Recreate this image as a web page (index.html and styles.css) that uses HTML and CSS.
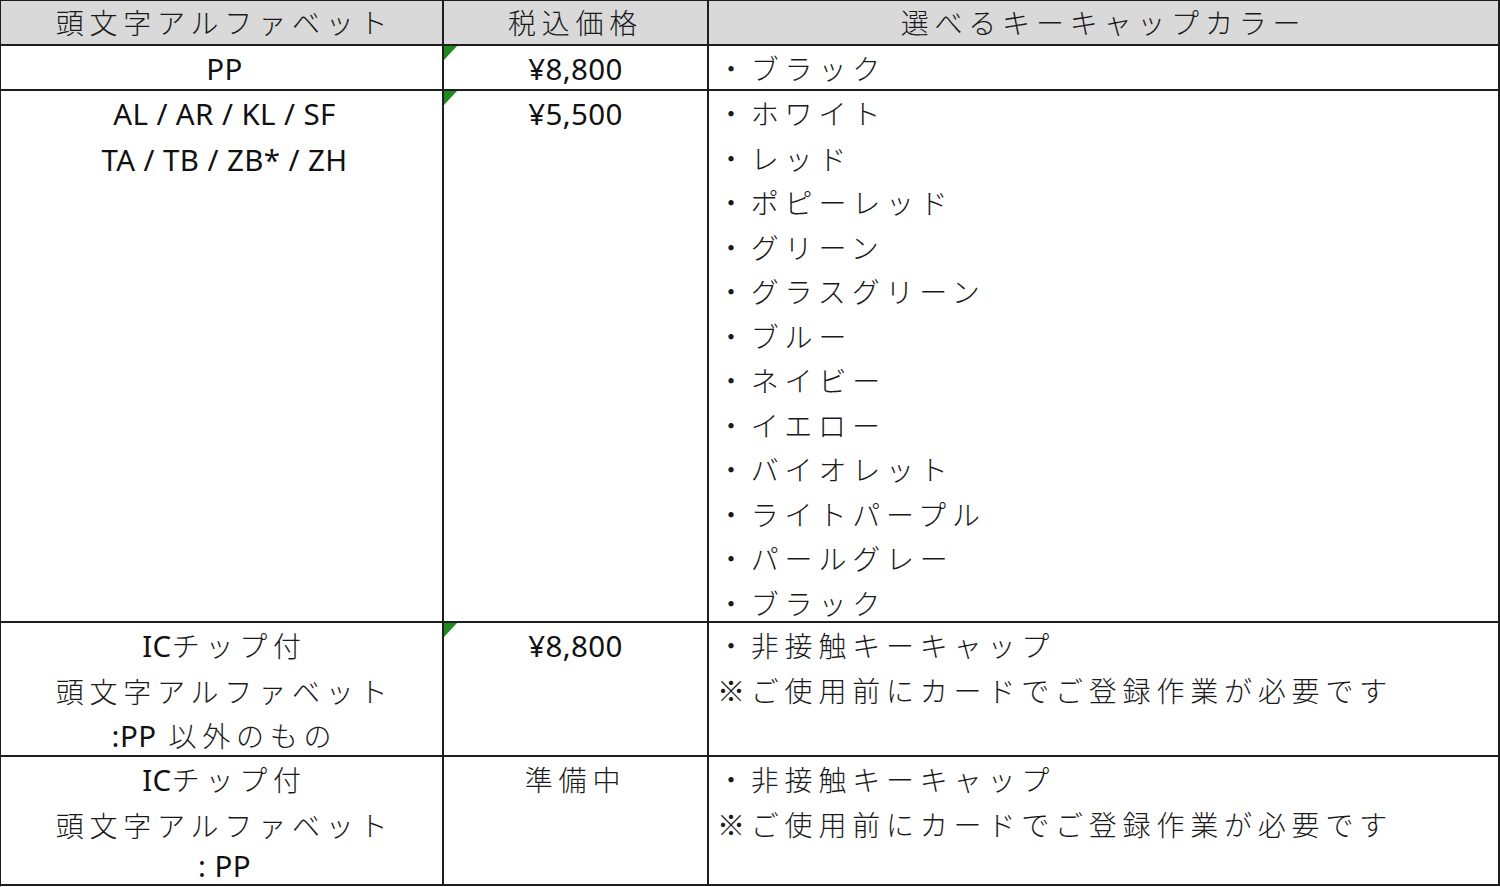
FILE: index.html
```html
<!DOCTYPE html>
<html lang="ja">
<head>
<meta charset="utf-8">
<title>キーキャップ価格表</title>
<link rel="stylesheet" href="styles.css">
</head>
<body>
<div class="sheet">
  <div class="cell head c1">頭文字アルファベット</div>
  <div class="cell head c2">税込価格</div>
  <div class="cell head c3">選べるキーキャップカラー</div>

  <div class="cell c1"><span class="lat">PP</span></div>
  <div class="cell c2 flag"><span class="lat">¥8,800</span></div>
  <div class="cell c3"><div>・ブラック</div></div>

  <div class="cell c1">
    <div><span class="lat">AL / AR / KL / SF</span></div>
    <div><span class="lat">TA / TB / ZB* / ZH</span></div>
  </div>
  <div class="cell c2 flag"><span class="lat">¥5,500</span></div>
  <div class="cell c3">
    <div>・ホワイト</div>
    <div>・レッド</div>
    <div>・ポピーレッド</div>
    <div>・グリーン</div>
    <div>・グラスグリーン</div>
    <div>・ブルー</div>
    <div>・ネイビー</div>
    <div>・イエロー</div>
    <div>・バイオレット</div>
    <div>・ライトパープル</div>
    <div>・パールグレー</div>
    <div>・ブラック</div>
  </div>

  <div class="cell c1">
    <div><span class="lat">IC</span>チップ付</div>
    <div>頭文字アルファベット</div>
    <div><span class="lat">:PP</span> 以外のもの</div>
  </div>
  <div class="cell c2 flag"><span class="lat">¥8,800</span></div>
  <div class="cell c3">
    <div>・非接触キーキャップ</div>
    <div class="note">※ご使用前にカードでご登録作業が必要です</div>
  </div>

  <div class="cell c1">
    <div><span class="lat">IC</span>チップ付</div>
    <div>頭文字アルファベット</div>
    <div class="lastline"><span class="lat">: PP</span></div>
  </div>
  <div class="cell c2">準備中</div>
  <div class="cell c3">
    <div>・非接触キーキャップ</div>
    <div class="note">※ご使用前にカードでご登録作業が必要です</div>
  </div>
</div>
</body>
</html>
```

FILE: styles.css
```css
html, body {
  margin: 0;
  padding: 0;
  background: #ffffff;
}

.sheet {
  width: 1500px;
  height: 887px;
  box-sizing: border-box;
  display: grid;
  grid-template-columns: 443px 265px 1fr;
  grid-template-rows: 45px 45px 532px 134px 1fr;
  border-top: 1px solid #1e1e1e;
  border-left: 1px solid #1e1e1e;
  border-bottom: 1px solid #ffffff;
  font-family: "Noto Sans CJK JP", "Noto Sans", sans-serif;
  font-weight: 300;
  font-size: 28px;
  line-height: 44.5px;
  color: #1a1a1a;
  letter-spacing: 5.8px;
  overflow: hidden;
}

.cell {
  border-right: 2px solid #1e1e1e;
  border-bottom: 2px solid #1e1e1e;
  overflow: hidden;
  white-space: nowrap;
  position: relative;
}

.head {
  background: #d9d9d9;
  line-height: 43px;
}

.c1, .c2 {
  text-align: center;
}

.c1 {
  padding-left: 6px;
}

.c3 {
  text-align: left;
  padding-left: 8px;
}

.head.c3 {
  text-align: center;
  padding-left: 0;
}

.lat {
  font-family: "Noto Sans", "Open Sans", sans-serif;
  font-weight: 400;
  font-size: 29.5px;
  letter-spacing: 0.4px;
  color: #111111;
}

.lastline {
  line-height: 36px;
}

.flag::before {
  content: "";
  position: absolute;
  left: 0;
  top: 0;
  width: 0;
  height: 0;
  border-top: 14px solid #1f8a1f;
  border-right: 13px solid transparent;
}
```
